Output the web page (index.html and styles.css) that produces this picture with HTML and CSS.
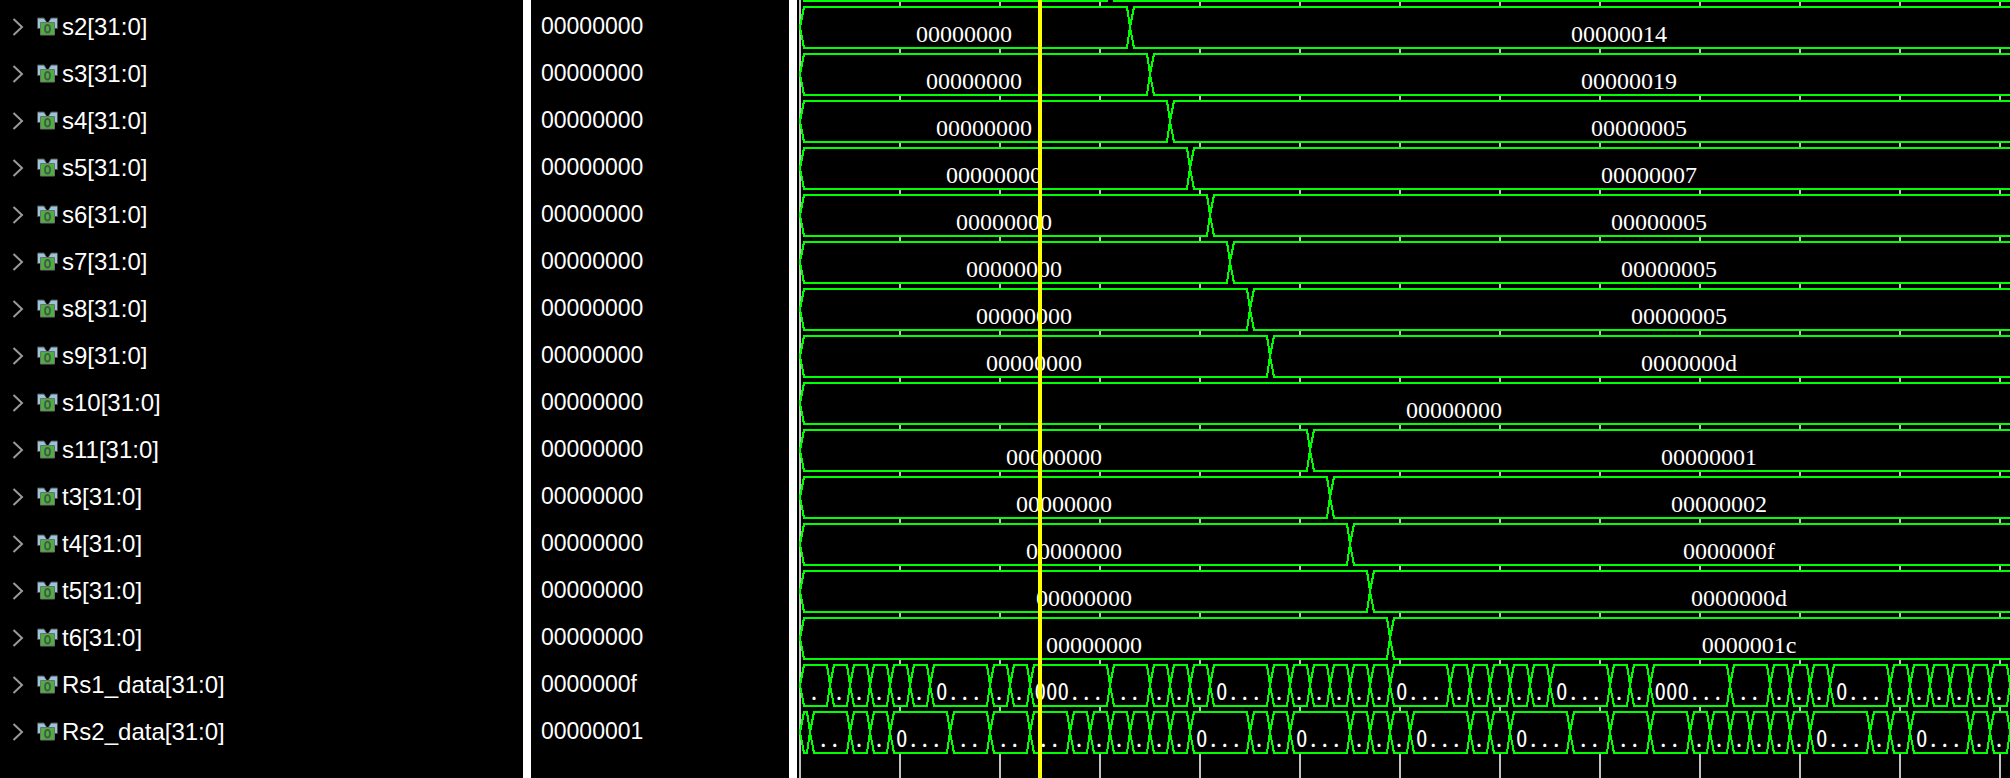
FILE: index.html
```
<!DOCTYPE html>
<html lang="en">
<head>
<meta charset="utf-8">
<title>Waveform viewer</title>
<link rel="stylesheet" href="styles.css">
</head>
<body>
<main class="viewer">
  <ul class="pane names" id="names" aria-label="Signal names"></ul>
  <div class="splitter"></div>
  <ul class="pane values" id="values" aria-label="Signal values"></ul>
  <div class="splitter"></div>
  <section class="plot" id="plot" aria-label="Waveforms"></section>
</main>
<svg class="defs" width="0" height="0" aria-hidden="true">
  <symbol id="bus" viewBox="0 0 21 19">
    <path d="M.5 1v10.500h4V6h12v5.500h4V1h-6.500l-3 4.500h-1L7 1z" fill="#9cc3dc" stroke="#4d4d4d"/>
    <path d="M7.500 0h6l-2.500 5h-1z" fill="#000"/>
    <path d="M3.500 5.500h14v12.500h-14z" fill="#4caf3f" stroke="#6e6e6e"/>
    <ellipse cx="10.500" cy="11.700" rx="2.500" ry="3.800" fill="none" stroke="#46584a" stroke-width="1.800"/>
  </symbol>
  <symbol id="chevron" viewBox="0 0 12 18">
    <path d="M1.500 1l8.500 8-8.500 8" fill="none" stroke="#9a9a9a" stroke-width="2"/>
  </symbol>
</svg>
<script src="viewer.js"></script>
</body>
</html>
```
FILE: styles.css
```
* {
  box-sizing: border-box;
}

body {
  margin: 0;
  background: #000;
  color: #fff;
  font-family: "Liberation Sans", Arial, sans-serif;
  font-size: 23px;
}

.viewer {
  display: grid;
  grid-template-columns: 523px 8px 258px 8px minmax(0, 1fr);
  height: 100vh;
  overflow: hidden;
}

.splitter {
  background: #fff;
}

.pane {
  margin: 0;
  padding: 3px 0 0;
  list-style: none;
  overflow: hidden;
}

.row {
  display: flex;
  align-items: center;
  height: 47px;
  line-height: 47px;
  white-space: nowrap;
}

.names {
  font-size: 24px;
}

.names .row {
  padding-left: 12px;
}

.values .row {
  padding-left: 10px;
}

.toggle {
  display: flex;
  align-items: center;
  margin: 0 13px 0 0;
  padding: 0;
  border: 0;
  background: none;
}

.chevron {
  width: 12px;
  height: 18px;
}

.bus {
  flex: none;
  width: 21px;
  height: 19px;
  margin-right: 4px;
}

.plot {
  overflow: hidden;
}

.waves {
  display: block;
  width: 100%;
  height: 100%;
}

.grid-line {
  stroke: #c0c0c0;
  stroke-width: 2;
  shape-rendering: crispEdges;
}

.segment {
  fill: #000;
  stroke: #0f0;
  stroke-width: 2;
  shape-rendering: crispEdges;
}

.label {
  fill: #fff;
  font-family: "Liberation Serif", serif;
  font-size: 24px;
  text-anchor: middle;
}

.label-short {
  font-family: "Noto Sans CJK SC", sans-serif;
  font-feature-settings: "hwid";
  font-size: 23px;
}

.cursor {
  stroke: #ff0;
  stroke-width: 4;
  shape-rendering: crispEdges;
}

.defs {
  position: absolute;
}
```
FILE: viewer.js
```
const ZERO = "00000000";
const END = 1311;
const PITCH = 47;

// Each signal: name, value at the cursor, transition times, bus values between them.
const signals = [
  ["s2", ZERO, [331], [ZERO, "00000014"]],
  ["s3", ZERO, [351], [ZERO, "00000019"]],
  ["s4", ZERO, [371], [ZERO, "00000005"]],
  ["s5", ZERO, [391], [ZERO, "00000007"]],
  ["s6", ZERO, [411], [ZERO, "00000005"]],
  ["s7", ZERO, [431], [ZERO, "00000005"]],
  ["s8", ZERO, [451], [ZERO, "00000005"]],
  ["s9", ZERO, [471], [ZERO, "0000000d"]],
  ["s10", ZERO, [], [ZERO]],
  ["s11", ZERO, [511], [ZERO, "00000001"]],
  ["t3", ZERO, [531], [ZERO, "00000002"]],
  ["t4", ZERO, [551], [ZERO, "0000000f"]],
  ["t5", ZERO, [571], [ZERO, "0000000d"]],
  ["t6", ZERO, [591], [ZERO, "0000001c"]],
  ["Rs1_data", "0000000f", [31, 51, 71, 91, 111, 131, 191, 211, 231, 311, 351, 371, 391, 411,
    471, 491, 511, 531, 551, 571, 591, 651, 671, 691, 711, 731, 751, 811, 831, 851, 931, 971,
    991, 1011, 1031, 1091, 1111, 1131, 1151, 1171, 1191, 1211]],
  ["Rs2_data", "00000001", [11, 51, 71, 91, 151, 191, 231, 271, 291, 311, 331, 351, 371, 391,
    451, 471, 491, 551, 571, 591, 611, 671, 691, 711, 771, 811, 851, 891, 911, 931, 951, 971,
    991, 1011, 1071, 1091, 1111, 1171, 1191, 1211]],
];

// Values that do not fit are cut down to the room in their segment.
const shortened = (width) =>
  width >= 80 ? "000..." : width >= 60 ? "0..." : width >= 40 ? ".." : width >= 20 ? "." : "";

document.getElementById("names").innerHTML = signals.map(([name]) => `
  <li class="row">
    <button class="toggle" aria-label="Expand ${name}"><svg class="chevron"><use href="#chevron"/></svg></button>
    <svg class="bus" aria-hidden="true"><use href="#bus"/></svg>
    <span>${name}[31:0]</span>
  </li>`).join("");

document.getElementById("values").innerHTML = signals
  .map(([, value]) => `<li class="row">${value}</li>`).join("");

const bus = (from, to, top) => {
  const mid = top + 20;
  const bottom = top + 41;
  return `<path class="segment" d="M${from} ${mid}L${from + 4} ${top}H${to - 3}L${to} ${mid}L${to - 3} ${bottom}H${from + 4}Z"/>`;
};

const parts = [];
for (let x = 3; x < 4000; x += 100) {
  parts.push(`<line class="grid-line" x1="${x}" x2="${x}" y1="0" y2="100%"/>`);
}
parts.push(bus(3, 313, -40), bus(313, END + 4, -40));

const labels = [];
signals.forEach(([, , times, values], row) => {
  const top = 7 + row * PITCH;
  const edges = [1, ...times, END].map((x) => x + 2);
  for (let i = 0; i + 1 < edges.length; i++) {
    const [from, to] = [edges[i], edges[i + 1]];
    parts.push(bus(from, to, top));
    const open = i + 2 === edges.length;
    const text = values ? values[i] : open ? "" : shortened(to - from);
    if (text) {
      const kind = values ? "label" : "label label-short";
      labels.push(`<text class="${kind}" x="${(from + to) / 2 - 1}" y="${top + 35}">${text}</text>`);
    }
  }
});

document.getElementById("plot").innerHTML = `<svg class="waves">${parts.join("")}${labels.join("")}
  <line class="cursor" x1="243" x2="243" y1="0" y2="100%"/></svg>`;
```
